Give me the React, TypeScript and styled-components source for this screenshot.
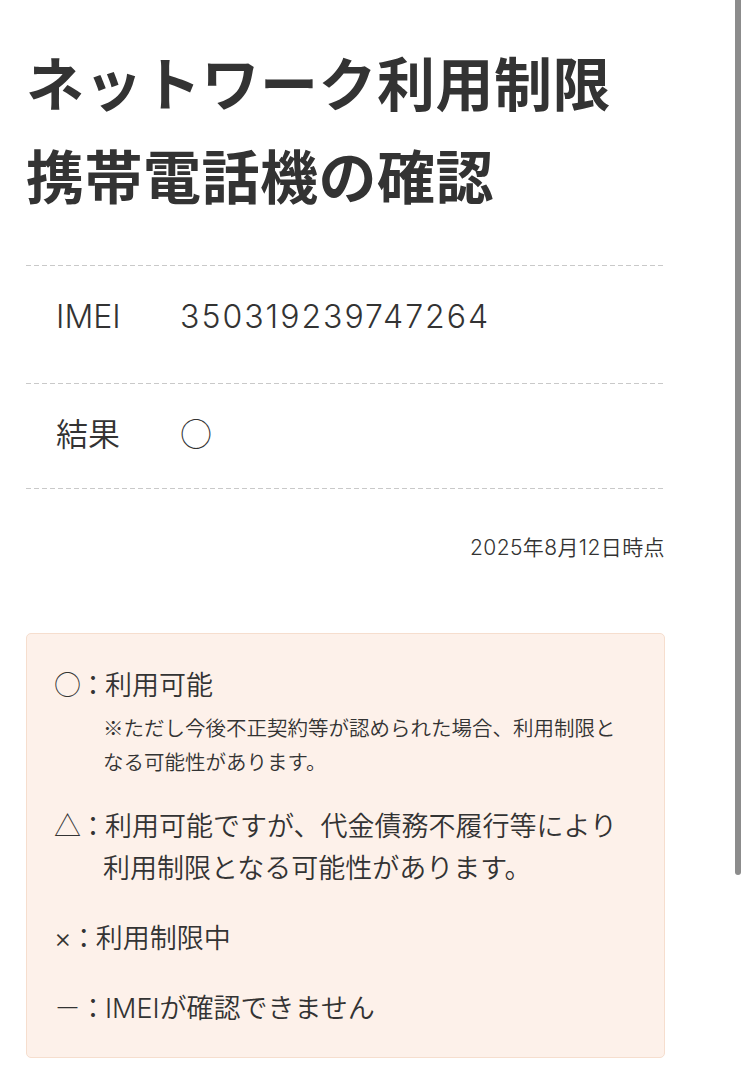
import React from 'react'
import styled, { createGlobalStyle, css } from 'styled-components'

const GlobalStyle = createGlobalStyle`
    html, body {
        margin: 0;
        padding: 0;
        background: #fff;
    }

    body {
        font-family: Inter, "Noto Sans CJK JP", sans-serif;
        font-weight: 350;
        color: #333;
        -webkit-font-smoothing: antialiased;
    }
`

const cjk = `"Noto Sans CJK JP", sans-serif`

const dashedLine = (position: 'top' | 'bottom') => css`
    background-image: linear-gradient(to right, #c9c9c9 5px, transparent 5px);
    background-size: 8px 1px;
    background-repeat: repeat-x;
    background-position: left ${position};
`

const Page = styled.main`
    width: 639px;
    padding: 35px 0 22px 26px;
`

const Title = styled.h1`
    margin: 0;
    font-family: ${cjk};
    font-size: 58px;
    font-weight: 700;
    line-height: 1.6;
    letter-spacing: 0.5px;
    color: #333;
`

const Table = styled.dl`
    margin: 44px 0 0;
    padding-bottom: 1px;
    ${dashedLine('bottom')}
`

const Row = styled.div<{ $bottom: number }>`
    display: grid;
    grid-template-columns: 124px 1fr;
    align-items: center;
    padding: 28px 0 ${p => p.$bottom}px 30px;
    font-size: 32px;
    line-height: 48px;
    ${dashedLine('top')}
`

const Label = styled.dt`
    margin: 0;
`

const Value = styled.dd`
    margin: 0;
    letter-spacing: 2px;
`

const Symbol = styled.span`
    font-family: ${cjk};
    font-weight: 300;
    line-height: 1;
`

const Stamp = styled.p`
    margin: 43px 0 0;
    text-align: right;
    font-size: 21px;
    line-height: 31px;
    letter-spacing: 0.4px;
`

const Legend = styled.section`
    margin-top: 70px;
    padding: 31px 36px 27px 27px;
    background: #fdf1ea;
    border: 1px solid #f6dece;
    border-radius: 5px;
`

const Item = styled.p`
    margin: 28px 0 0;
    padding-left: 49px;
    text-indent: -49px;
    font-size: 27px;
    line-height: 42px;

    &:first-child {
        margin-top: 0;
    }
`

const Mark = styled.span<{ $latin?: boolean }>`
    font-family: ${p => (p.$latin ? 'Inter, sans-serif' : cjk)};
    font-weight: 300;
    line-height: 1;
    letter-spacing: -1.5px;
`

const Colon = styled.span`
    font-family: ${cjk};
    line-height: 1;
    letter-spacing: -1.5px;
`

const Note = styled.span`
    display: block;
    margin-top: 3px;
    text-indent: 0;
    font-family: ${cjk};
    font-size: 20.5px;
    line-height: 34px;
`

const Scrollbar = styled.div`
    position: fixed;
    top: 0;
    right: 3px;
    width: 6px;
    height: 875px;
    background: #8c8c8c;
    border-radius: 0 0 3px 3px;
`

const App = () => {
    return (
        <>
            <GlobalStyle />
            <Page>
                <Title>
                    ネットワーク利用制限
                    <br />
                    携帯電話機の確認
                </Title>
                <Table>
                    <Row $bottom={42}>
                        <Label>IMEI</Label>
                        <Value>350319239747264</Value>
                    </Row>
                    <Row $bottom={29}>
                        <Label>結果</Label>
                        <Value><Symbol>○</Symbol></Value>
                    </Row>
                </Table>
                <Stamp>2025年8月12日時点</Stamp>
                <Legend>
                    <Item>
                        <Mark>○</Mark><Colon>：</Colon>利用可能
                        <Note>※ただし今後不正契約等が認められた場合、利用制限となる可能性があります。</Note>
                    </Item>
                    <Item>
                        <Mark>△</Mark><Colon>：</Colon>利用可能ですが、代金債務不履行等により利用制限となる可能性があります。
                    </Item>
                    <Item>
                        <Mark $latin>×</Mark><Colon>：</Colon>利用制限中
                    </Item>
                    <Item>
                        <Mark>－</Mark><Colon>：</Colon>IMEIが確認できません
                    </Item>
                </Legend>
            </Page>
            <Scrollbar />
        </>
    )
}

export default App
